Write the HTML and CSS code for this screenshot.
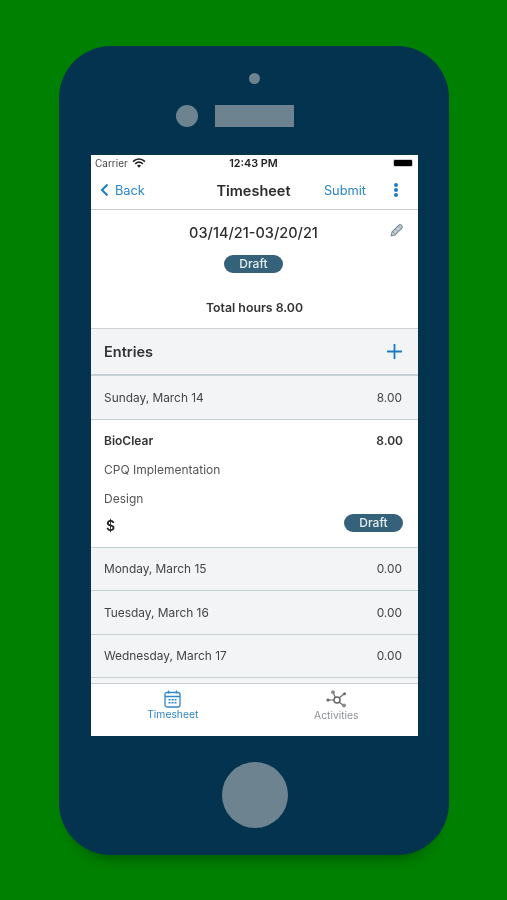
FILE: index.html
```html
<!DOCTYPE html>
<html lang="en">
<head>
    <meta charset="UTF-8">
    <meta name="viewport" content="width=device-width, initial-scale=1.0">
    <title>Timesheet</title>
    <link rel="stylesheet" href="styles.css">
</head>
<body>

    <div class="phone">
        <!-- Speaker and camera -->
        <div class="phone-top">
            <div class="dot"></div>
            <div class="sensors">
                <div class="camera"></div>
                <div class="speaker"></div>
            </div>
        </div>

        <div class="screen">
            <!-- Status bar -->
            <div class="status">
                <div class="carrier">
                    Carrier
                    <svg class="wifi" width="14" height="10" viewBox="0 0 14 10">
                        <path d="M1 3.600C4.600 .4 9.400 .4 13 3.600" fill="none" stroke="#222" stroke-width="1.700"/>
                        <path d="M3.200 5.800C5.600 3.800 8.400 3.800 10.800 5.800" fill="none" stroke="#222" stroke-width="1.700"/>
                        <path d="M5 7.600C6.200 6.600 7.800 6.600 9 7.600L7 9.800Z" fill="#222"/>
                    </svg>
                </div>
                <div class="time">12:43 PM</div>
                <div class="battery"><div class="battery-fill"></div></div>
            </div>

            <!-- Nav bar -->
            <div class="nav">
                <div class="back">
                    <svg width="9" height="14" viewBox="0 0 9 14">
                        <path d="M7.500 1.500L2 7l5.500 5.500" fill="none" stroke="#1a7cc4" stroke-width="2"/>
                    </svg>
                    Back
                </div>
                <div class="nav-title">Timesheet</div>
                <div class="nav-actions">
                    <div class="submit">Submit</div>
                    <div class="more"><span></span><span></span><span></span></div>
                </div>
            </div>

            <!-- Summary -->
            <div class="summary">
                <svg class="pencil" width="14" height="14" viewBox="0 0 14 14">
                    <path d="M1.200 12.800l.8-3.800 6.800-6.800a1.700 1.700 0 0 1 2.500 0l.5.500a1.700 1.700 0 0 1 0 2.500l-6.800 6.800z" fill="#c6d0d6" stroke="#7d8d96" stroke-width="1.100"/>
                    <path d="M8.300 3l2.700 2.700M3 9l2 2M5.500 6l2.500 2.500" stroke="#7d8d96" stroke-width=".8"/>
                </svg>
                <div class="dates">03/14/21-03/20/21</div>
                <div class="badge">Draft</div>
                <div class="total">Total hours 8.00</div>
            </div>

            <!-- Entries -->
            <div class="entries-head">
                <div class="entries-title">Entries</div>
                <svg width="15" height="15" viewBox="0 0 15 15">
                    <path d="M7.500 0v15M0 7.500h15" stroke="#1a7cc4" stroke-width="1.800"/>
                </svg>
            </div>

            <div class="day"><span>Sunday, March 14</span><span>8.00</span></div>

            <div class="entry">
                <div class="entry-row entry-client"><span>BioClear</span><span>8.00</span></div>
                <div class="entry-line">CPQ Implementation</div>
                <div class="entry-line">Design</div>
                <div class="entry-foot">
                    <span class="dollar">$</span>
                    <div class="badge">Draft</div>
                </div>
            </div>

            <div class="day"><span>Monday, March 15</span><span>0.00</span></div>
            <div class="day"><span>Tuesday, March 16</span><span>0.00</span></div>
            <div class="day"><span>Wednesday, March 17</span><span>0.00</span></div>
            <div class="day-cut"></div>

            <!-- Tab bar -->
            <div class="tabs">
                <div class="tab tab-active">
                    <svg width="17" height="18" viewBox="0 0 17 18">
                        <rect x="1" y="2.500" width="15" height="14.500" rx="2" fill="none" stroke="#2f86c9" stroke-width="1.300"/>
                        <path d="M1 6.500h15M4.500 .5v3M12.500 .5v3" stroke="#2f86c9" stroke-width="1.300"/>
                        <path d="M4.500 9h2v1.500h-2zM7.500 9h2v1.500h-2zM10.500 9h2v1.500h-2zM4.500 12h2v1.500h-2zM7.500 12h2v1.500h-2zM10.500 12h2v1.500h-2z" fill="#2f86c9"/>
                    </svg>
                    <span>Timesheet</span>
                </div>
                <div class="tab">
                    <svg width="21" height="18" viewBox="0 0 21 18">
                        <path d="M2 10h6M7 2.500l2.500 5M13 12l4.500 3.500M13 8l5-4" stroke="#666" stroke-width="1.200"/>
                        <circle cx="11" cy="10" r="3" fill="#fff" stroke="#666" stroke-width="1.500"/>
                        <circle cx="2" cy="10" r="1.600" fill="#666"/>
                        <circle cx="7" cy="2.200" r="1.900" fill="#888"/>
                        <circle cx="18.500" cy="3.800" r="1.500" fill="#666"/>
                        <circle cx="18" cy="15.500" r="1.900" fill="#888"/>
                    </svg>
                    <span>Activities</span>
                </div>
            </div>
        </div>

        <div class="home"></div>
    </div>

</body>
</html>
```

FILE: styles.css
```css
body {
    margin: 0;
    height: 900px;
    overflow: hidden;
    background-color: #008000;
    font-family: Inter, "Liberation Sans", sans-serif;
    color: #333;
}

.phone {
    width: 390px;
    height: 809px;
    margin: 46px 0 0 59px;
    background-color: #03334e;
    border-radius: 52px;
    box-shadow: 0 14px 14px -12px rgba(0, 50, 0, 0.6);
    display: flex;
    flex-direction: column;
    align-items: center;
}

.phone-top {
    height: 109px;
    display: flex;
    flex-direction: column;
    align-items: center;
    padding-top: 27px;
    box-sizing: border-box;
}

.dot {
    width: 11px;
    height: 11px;
    border-radius: 50%;
    background-color: #6d8490;
}

.sensors {
    display: flex;
    gap: 17px;
    margin-top: 21px;
    margin-right: 38px;
}

.camera {
    width: 22px;
    height: 22px;
    border-radius: 50%;
    background-color: #6d8490;
}

.speaker {
    width: 79px;
    height: 22px;
    background-color: #6d8490;
}

.screen {
    width: 327px;
    height: 581px;
    margin-left: 1px;
    background-color: #fff;
    display: flex;
    flex-direction: column;
    filter: blur(0.4px);
}

.status {
    height: 18px;
    flex: none;
    box-sizing: border-box;
    padding: 0 5px 2px 4px;
    display: grid;
    grid-template-columns: 1fr auto 1fr;
    align-items: center;
    font-size: 10px;
}

.carrier {
    display: flex;
    align-items: center;
    gap: 5px;
    color: #444;
}

.wifi {
    margin-left: -1px;
}

.time {
    font-size: 10.800px;
    font-weight: 600;
    color: #222;
    margin-right: 1px;
}

.battery {
    width: 20px;
    height: 8px;
    padding: 1px;
    box-sizing: border-box;
    border-radius: 2px;
    background-color: #ccc;
    justify-self: end;
}

.battery-fill {
    height: 100%;
    border-radius: 1px;
    background-color: #000;
}

.nav {
    height: 37px;
    flex: none;
    box-sizing: border-box;
    border-bottom: 1px solid #c9cdcf;
    display: grid;
    grid-template-columns: 1fr auto 1fr;
    align-items: center;
    padding: 0 10px 2px 9px;
    font-size: 12.800px;
}

.back {
    display: flex;
    align-items: center;
    gap: 6px;
    color: #2a86c8;
}

.nav-title {
    font-size: 14.500px;
    font-weight: 600;
    color: #2b2b2b;
    margin-right: 1px;
}

.nav-actions {
    display: flex;
    align-items: center;
    justify-content: flex-end;
    gap: 28px;
    margin-right: 10px;
}

.submit {
    color: #2a86c8;
}

.more span {
    display: block;
    width: 4px;
    height: 4px;
    margin: 1px 0;
    border-radius: 50%;
    background-color: #1a7cc4;
}

.summary {
    height: 119px;
    flex: none;
    box-sizing: border-box;
    border-bottom: 1px solid #cfd3d5;
    display: flex;
    flex-direction: column;
    align-items: center;
    padding: 14px 2px 0 0;
    position: relative;
}

.pencil {
    position: absolute;
    top: 13px;
    right: 14px;
}

.dates {
    font-size: 14.500px;
    font-weight: 500;
    color: #2d2d2d;
    line-height: 18px;
}

.badge {
    width: 59px;
    height: 18px;
    border-radius: 9px;
    background-color: #35617a;
    color: #e6edf0;
    font-size: 12px;
    font-weight: 500;
    line-height: 18px;
    text-align: center;
}

.summary .badge {
    margin-top: 13px;
}

.total {
    margin: 27px 0 0 2px;
    font-size: 12.300px;
    font-weight: 600;
    line-height: 16px;
}

.entries-head {
    height: 47px;
    flex: none;
    box-sizing: border-box;
    background-color: #f2f4f6;
    border-bottom: 2px solid #c5d0d4;
    display: flex;
    align-items: center;
    justify-content: space-between;
    padding: 0 16px 0 13px;
}

.entries-title {
    font-size: 14.500px;
    font-weight: 600;
}

.day {
    height: 43.500px;
    flex: none;
    box-sizing: border-box;
    background-color: #f2f4f6;
    border-bottom: 1.500px solid #c5d0d4;
    display: flex;
    align-items: center;
    justify-content: space-between;
    padding: 0 16px 0 13px;
    font-size: 11.900px;
    color: #444;
}

.entry {
    height: 128px;
    flex: none;
    box-sizing: border-box;
    border-bottom: 1.500px solid #c5d0d4;
    padding: 13px 15px 0 13px;
    font-size: 12px;
    color: #555;
}

.entry-row {
    display: flex;
    justify-content: space-between;
    line-height: 16px;
}

.entry-client {
    font-weight: 600;
    color: #333;
}

.entry-line {
    margin-top: 13px;
    line-height: 16px;
}

.entry-foot {
    display: flex;
    justify-content: space-between;
    align-items: flex-start;
    margin-top: 7px;
}

.dollar {
    font-size: 14px;
    font-weight: 600;
    line-height: 18px;
    color: #222;
    margin: 3px 0 0 2px;
}

.day-cut {
    flex: 1;
    background-color: #f2f4f6;
}

.tabs {
    height: 53px;
    flex: none;
    box-sizing: border-box;
    border-top: 1px solid #c9cdcf;
    background-color: #fff;
    display: flex;
    padding-top: 6px;
}

.tab {
    flex: 1;
    display: flex;
    flex-direction: column;
    align-items: center;
    gap: 1px;
    font-size: 10.300px;
    color: #8d9396;
}

.tab-active {
    gap: 0;
    color: #2f86c9;
}

.home {
    width: 66px;
    height: 66px;
    margin: 26px 0 0 1px;
    border-radius: 50%;
    background-color: #6d8490;
}
```
